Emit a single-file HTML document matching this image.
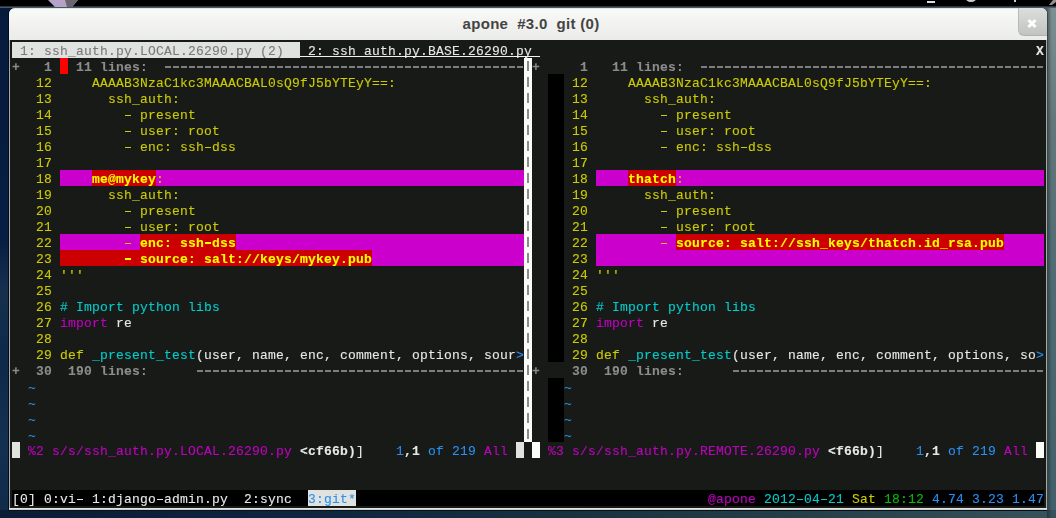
<!DOCTYPE html>
<html><head><meta charset="utf-8">
<style>
html,body{margin:0;padding:0;width:1056px;height:518px;overflow:hidden;background:#0e2440;}
#desk{position:absolute;left:0;top:0;width:1056px;height:518px;
 background:linear-gradient(90deg,#021a3c 0px,#031c3e 9px,#2c4a60 1000px,#4f6870 1056px);}
#panel{position:absolute;left:0;top:0;width:1056px;height:6px;background:#000;}
#pline{position:absolute;left:0;top:6px;width:1056px;height:2px;background:linear-gradient(180deg,#1a2230,#5a6a7c);}
#rstrip{position:absolute;left:1047px;top:0;width:9px;height:518px;background:linear-gradient(180deg,#7e9294 0px,#62787c 120px,#4e6a72 300px,#42606a 518px);}
#lstrip{position:absolute;left:0;top:0;width:9px;height:518px;background:linear-gradient(180deg,#061a3c 0px,#071e42 240px,#16304e 290px,#0e2848 360px,#143050 440px,#102a48 518px);}
#rshadow{position:absolute;left:1047px;top:8px;width:5px;height:510px;background:linear-gradient(90deg,rgba(0,0,0,.35),rgba(0,0,0,0));}
#bstrip{position:absolute;left:0;top:510px;width:1056px;height:8px;background:linear-gradient(90deg,#0a1c36 0px,#0e2440 300px,#163040 550px,#243e4a 800px,#36525c 1056px);}
#win{position:absolute;left:9px;top:8px;width:1038px;height:502px;background:#a8aaa6;border-radius:6px 6px 0 0;box-shadow:-1px 0 0 #000a20,1px 0 1px #3a4646,0 1px 0 #050a14;}
#wbot{position:absolute;left:9px;top:508px;width:1038px;height:2px;background:linear-gradient(180deg,#eef0ec,#c0c0bc);}
#title{position:absolute;left:9px;top:8px;width:1038px;height:32px;border-radius:6px 6px 0 0;
 background:linear-gradient(180deg,#c8ccc8 0px,#f8faf7 1px,#f4f5f2 12px,#ebece9 31px);}
#ttext{position:absolute;left:3px;top:15px;width:1056px;text-align:center;font:bold 15px "Liberation Sans",sans-serif;color:#444;letter-spacing:0.3px;line-height:17px;}
#close{position:absolute;left:1018px;top:8px;width:29px;height:28px;border-radius:0 6px 0 6px;
 background:linear-gradient(180deg,#dcdedb,#c2c4c1);border-left:1px solid #b8bab7;border-bottom:1px solid #b0b2af;box-sizing:border-box;}
#close:before,#close:after{content:"";position:absolute;left:8px;top:14px;width:10px;height:3px;background:#fff;transform:rotate(45deg);}
#close:after{transform:rotate(-45deg);}
#term{position:absolute;left:10px;top:40px;width:1036px;height:468px;background:#181a17;}
.b{position:absolute;height:16px;display:block;}
s.t{position:absolute;height:16px;line-height:16px;white-space:pre;text-decoration:none;
 font-family:"Liberation Mono",monospace;font-size:13px;letter-spacing:0.1987px;-webkit-text-stroke:0.1px currentColor;}
.d{position:absolute;width:2px;height:10px;background:#8a8a8a;display:block;}
.ic{position:absolute;}
</style></head><body>
<div id="desk"></div>
<div id="rstrip"></div><div id="lstrip"></div>
<div id="bstrip"></div><div id="rshadow"></div>
<div id="panel"></div><div id="pline"></div>
<svg class="ic" style="left:44px;top:0px" width="36" height="8" viewBox="0 0 36 8"><path d="M4 0 L34 0 L28 7 L11 7 Z" fill="#b4a2c8"/><path d="M21 0 L34 0 L28 7 L23 7 Z" fill="#6a6670"/></svg>
<div class="ic" style="left:927px;top:1px;width:8px;height:2px;background:#ddd"></div>
<div class="ic" style="left:965px;top:-9px;width:12px;height:11px;border-radius:50%;border:2px solid #ccc;box-sizing:border-box"></div>
<div class="ic" style="left:1014px;top:0px;width:2px;height:2px;background:#ccc"></div>
<svg class="ic" style="left:1046px;top:0px" width="10" height="6" viewBox="0 0 10 6"><path d="M3 5 L7 0 L10 0 L10 2 L6 5 Z" fill="#909090"/></svg>
<div id="win"></div><div id="wbot"></div>
<div id="title"></div>
<div id="ttext">apone&nbsp; #3.0&nbsp; git (0)</div>
<div id="close"></div>
<div id="term"></div>
<div id="tl" style="position:absolute;left:0;top:0;width:1056px;height:518px;will-change:transform">
<i class="b" style="left:12px;top:42px;width:288px;background:#e0e2df"></i>
<s class="t" style="left:20px;top:44px;color:#7a7a7a">1: ssh_auth.py.LOCAL.26290.py (2)</s>
<s class="t" style="left:308px;top:44px;color:#e8e8e8">2: ssh_auth.py.BASE.26290.py</s>
<s class="t" style="left:1036px;top:44px;color:#e8e8e8;font-weight:bold">X</s>
<i class="b" style="left:60px;top:58px;width:8px;background:#ff0000"></i>
<s class="t" style="left:12px;top:60px;color:#8c8c8c;font-weight:bold">+</s>
<s class="t" style="left:44px;top:60px;color:#8c8c8c;font-weight:bold">1</s>
<s class="t" style="left:76px;top:60px;color:#8c8c8c;font-weight:bold">11 lines:</s>
<s class="t" style="left:532px;top:60px;color:#8c8c8c;font-weight:bold">+</s>
<s class="t" style="left:580px;top:60px;color:#8c8c8c;font-weight:bold">1</s>
<s class="t" style="left:612px;top:60px;color:#8c8c8c;font-weight:bold">11 lines:</s>
<i class="b" style="left:548px;top:74px;width:16px;background:#000000"></i>
<s class="t" style="left:36px;top:76px;color:#cccc00">12</s>
<s class="t" style="left:92px;top:76px;color:#cccc00">AAAAB3NzaC1kc3MAAACBAL0sQ9fJ5bYTEyY==:</s>
<s class="t" style="left:572px;top:76px;color:#cccc00">12</s>
<s class="t" style="left:628px;top:76px;color:#cccc00">AAAAB3NzaC1kc3MAAACBAL0sQ9fJ5bYTEyY==:</s>
<i class="b" style="left:548px;top:90px;width:16px;background:#000000"></i>
<s class="t" style="left:36px;top:92px;color:#cccc00">13</s>
<s class="t" style="left:108px;top:92px;color:#cccc00">ssh_auth:</s>
<s class="t" style="left:572px;top:92px;color:#cccc00">13</s>
<s class="t" style="left:644px;top:92px;color:#cccc00">ssh_auth:</s>
<i class="b" style="left:548px;top:106px;width:16px;background:#000000"></i>
<s class="t" style="left:36px;top:108px;color:#cccc00">14</s>
<s class="t" style="left:140px;top:108px;color:#cccc00">present</s>
<s class="t" style="left:572px;top:108px;color:#cccc00">14</s>
<s class="t" style="left:676px;top:108px;color:#cccc00">present</s>
<i class="b" style="left:548px;top:122px;width:16px;background:#000000"></i>
<s class="t" style="left:36px;top:124px;color:#cccc00">15</s>
<s class="t" style="left:140px;top:124px;color:#cccc00">user: root</s>
<s class="t" style="left:572px;top:124px;color:#cccc00">15</s>
<s class="t" style="left:676px;top:124px;color:#cccc00">user: root</s>
<i class="b" style="left:548px;top:138px;width:16px;background:#000000"></i>
<s class="t" style="left:36px;top:140px;color:#cccc00">16</s>
<s class="t" style="left:140px;top:140px;color:#cccc00">enc: ssh dss</s>
<s class="t" style="left:572px;top:140px;color:#cccc00">16</s>
<s class="t" style="left:676px;top:140px;color:#cccc00">enc: ssh dss</s>
<i class="b" style="left:548px;top:154px;width:16px;background:#000000"></i>
<s class="t" style="left:36px;top:156px;color:#cccc00">17</s>
<s class="t" style="left:572px;top:156px;color:#cccc00">17</s>
<i class="b" style="left:60px;top:170px;width:32px;background:#cc00cc"></i>
<i class="b" style="left:92px;top:170px;width:64px;background:#cc0000"></i>
<i class="b" style="left:156px;top:170px;width:368px;background:#cc00cc"></i>
<i class="b" style="left:548px;top:170px;width:16px;background:#000000"></i>
<i class="b" style="left:596px;top:170px;width:32px;background:#cc00cc"></i>
<i class="b" style="left:628px;top:170px;width:48px;background:#cc0000"></i>
<i class="b" style="left:676px;top:170px;width:368px;background:#cc00cc"></i>
<s class="t" style="left:36px;top:172px;color:#cccc00">18</s>
<s class="t" style="left:92px;top:172px;color:#ffff00;font-weight:bold">me@mykey</s>
<s class="t" style="left:156px;top:172px;color:#cccc00">:</s>
<s class="t" style="left:572px;top:172px;color:#cccc00">18</s>
<s class="t" style="left:628px;top:172px;color:#ffff00;font-weight:bold">thatch</s>
<s class="t" style="left:676px;top:172px;color:#cccc00">:</s>
<i class="b" style="left:548px;top:186px;width:16px;background:#000000"></i>
<s class="t" style="left:36px;top:188px;color:#cccc00">19</s>
<s class="t" style="left:108px;top:188px;color:#cccc00">ssh_auth:</s>
<s class="t" style="left:572px;top:188px;color:#cccc00">19</s>
<s class="t" style="left:644px;top:188px;color:#cccc00">ssh_auth:</s>
<i class="b" style="left:548px;top:202px;width:16px;background:#000000"></i>
<s class="t" style="left:36px;top:204px;color:#cccc00">20</s>
<s class="t" style="left:140px;top:204px;color:#cccc00">present</s>
<s class="t" style="left:572px;top:204px;color:#cccc00">20</s>
<s class="t" style="left:676px;top:204px;color:#cccc00">present</s>
<i class="b" style="left:548px;top:218px;width:16px;background:#000000"></i>
<s class="t" style="left:36px;top:220px;color:#cccc00">21</s>
<s class="t" style="left:140px;top:220px;color:#cccc00">user: root</s>
<s class="t" style="left:572px;top:220px;color:#cccc00">21</s>
<s class="t" style="left:676px;top:220px;color:#cccc00">user: root</s>
<i class="b" style="left:60px;top:234px;width:80px;background:#cc00cc"></i>
<i class="b" style="left:140px;top:234px;width:96px;background:#cc0000"></i>
<i class="b" style="left:236px;top:234px;width:288px;background:#cc00cc"></i>
<i class="b" style="left:548px;top:234px;width:16px;background:#000000"></i>
<i class="b" style="left:596px;top:234px;width:80px;background:#cc00cc"></i>
<i class="b" style="left:676px;top:234px;width:328px;background:#cc0000"></i>
<i class="b" style="left:1004px;top:234px;width:40px;background:#cc00cc"></i>
<s class="t" style="left:36px;top:236px;color:#cccc00">22</s>
<s class="t" style="left:140px;top:236px;color:#ffff00;font-weight:bold">enc: ssh dss</s>
<s class="t" style="left:572px;top:236px;color:#cccc00">22</s>
<s class="t" style="left:676px;top:236px;color:#ffff00;font-weight:bold">source: salt://ssh_keys/thatch.id_rsa.pub</s>
<i class="b" style="left:60px;top:250px;width:312px;background:#cc0000"></i>
<i class="b" style="left:372px;top:250px;width:152px;background:#cc00cc"></i>
<i class="b" style="left:548px;top:250px;width:16px;background:#000000"></i>
<i class="b" style="left:596px;top:250px;width:448px;background:#cc00cc"></i>
<s class="t" style="left:36px;top:252px;color:#cccc00">23</s>
<s class="t" style="left:140px;top:252px;color:#ffff00;font-weight:bold">source: salt://keys/mykey.pub</s>
<s class="t" style="left:572px;top:252px;color:#cccc00">23</s>
<i class="b" style="left:548px;top:266px;width:16px;background:#000000"></i>
<s class="t" style="left:36px;top:268px;color:#cccc00">24 &#x27;&#x27;&#x27;</s>
<s class="t" style="left:572px;top:268px;color:#cccc00">24 &#x27;&#x27;&#x27;</s>
<i class="b" style="left:548px;top:282px;width:16px;background:#000000"></i>
<s class="t" style="left:36px;top:284px;color:#cccc00">25</s>
<s class="t" style="left:572px;top:284px;color:#cccc00">25</s>
<i class="b" style="left:548px;top:298px;width:16px;background:#000000"></i>
<s class="t" style="left:36px;top:300px;color:#cccc00">26</s>
<s class="t" style="left:60px;top:300px;color:#00cdcd"># Import python libs</s>
<s class="t" style="left:572px;top:300px;color:#cccc00">26</s>
<s class="t" style="left:596px;top:300px;color:#00cdcd"># Import python libs</s>
<i class="b" style="left:548px;top:314px;width:16px;background:#000000"></i>
<s class="t" style="left:36px;top:316px;color:#cccc00">27</s>
<s class="t" style="left:60px;top:316px;color:#c000c0">import</s>
<s class="t" style="left:116px;top:316px;color:#e8e8e8">re</s>
<s class="t" style="left:572px;top:316px;color:#cccc00">27</s>
<s class="t" style="left:596px;top:316px;color:#c000c0">import</s>
<s class="t" style="left:652px;top:316px;color:#e8e8e8">re</s>
<i class="b" style="left:548px;top:330px;width:16px;background:#000000"></i>
<s class="t" style="left:36px;top:332px;color:#cccc00">28</s>
<s class="t" style="left:572px;top:332px;color:#cccc00">28</s>
<i class="b" style="left:548px;top:346px;width:16px;background:#000000"></i>
<s class="t" style="left:36px;top:348px;color:#cccc00">29 def</s>
<s class="t" style="left:92px;top:348px;color:#00cdcd">_present_test</s>
<s class="t" style="left:196px;top:348px;color:#e8e8e8">(user, name, enc, comment, options, sour</s>
<s class="t" style="left:516px;top:348px;color:#2a90f2">&gt;</s>
<s class="t" style="left:572px;top:348px;color:#cccc00">29 def</s>
<s class="t" style="left:628px;top:348px;color:#00cdcd">_present_test</s>
<s class="t" style="left:732px;top:348px;color:#e8e8e8">(user, name, enc, comment, options, so</s>
<s class="t" style="left:1036px;top:348px;color:#2a90f2">&gt;</s>
<s class="t" style="left:12px;top:364px;color:#8c8c8c;font-weight:bold">+</s>
<s class="t" style="left:36px;top:364px;color:#8c8c8c;font-weight:bold">30</s>
<s class="t" style="left:68px;top:364px;color:#8c8c8c;font-weight:bold">190 lines:</s>
<s class="t" style="left:532px;top:364px;color:#8c8c8c;font-weight:bold">+</s>
<s class="t" style="left:572px;top:364px;color:#8c8c8c;font-weight:bold">30</s>
<s class="t" style="left:604px;top:364px;color:#8c8c8c;font-weight:bold">190 lines:</s>
<i class="b" style="left:548px;top:378px;width:16px;background:#000000"></i>
<s class="t" style="left:28px;top:381px;color:#2a90f2">~</s>
<s class="t" style="left:564px;top:381px;color:#2a90f2">~</s>
<i class="b" style="left:548px;top:394px;width:16px;background:#000000"></i>
<s class="t" style="left:28px;top:397px;color:#2a90f2">~</s>
<s class="t" style="left:564px;top:397px;color:#2a90f2">~</s>
<i class="b" style="left:548px;top:410px;width:16px;background:#000000"></i>
<s class="t" style="left:28px;top:413px;color:#2a90f2">~</s>
<s class="t" style="left:564px;top:413px;color:#2a90f2">~</s>
<i class="b" style="left:548px;top:426px;width:16px;background:#000000"></i>
<s class="t" style="left:28px;top:429px;color:#2a90f2">~</s>
<s class="t" style="left:564px;top:429px;color:#2a90f2">~</s>
<i class="b" style="left:12px;top:442px;width:8px;background:#e0e2df"></i>
<i class="b" style="left:516px;top:442px;width:8px;background:#e0e2df"></i>
<i class="b" style="left:532px;top:442px;width:8px;background:#fbfbf8"></i>
<i class="b" style="left:1036px;top:442px;width:8px;background:#fbfbf8"></i>
<s class="t" style="left:28px;top:444px;color:#c000c0">%2 s/s/ssh_auth.py.LOCAL.26290.py</s>
<s class="t" style="left:300px;top:444px;color:#e8e8e8;font-weight:bold">&lt;cf66b)</s>
<s class="t" style="left:356px;top:444px;color:#e8e8e8">]</s>
<s class="t" style="left:396px;top:444px;color:#2a90f2">1</s>
<s class="t" style="left:404px;top:444px;color:#e8e8e8;font-weight:bold">,1</s>
<s class="t" style="left:428px;top:444px;color:#2a90f2">of 219</s>
<s class="t" style="left:484px;top:444px;color:#c000c0">All</s>
<s class="t" style="left:548px;top:444px;color:#c000c0">%3 s/s/ssh_auth.py.REMOTE.26290.py</s>
<s class="t" style="left:828px;top:444px;color:#e8e8e8;font-weight:bold">&lt;f66b)</s>
<s class="t" style="left:876px;top:444px;color:#e8e8e8">]</s>
<s class="t" style="left:916px;top:444px;color:#2a90f2">1</s>
<s class="t" style="left:924px;top:444px;color:#e8e8e8;font-weight:bold">,1</s>
<s class="t" style="left:948px;top:444px;color:#2a90f2">of 219</s>
<s class="t" style="left:1004px;top:444px;color:#c000c0">All</s>
<i class="b" style="left:12px;top:490px;width:296px;background:#000000"></i>
<i class="b" style="left:308px;top:490px;width:48px;background:#e0e2df"></i>
<i class="b" style="left:356px;top:490px;width:688px;background:#000000"></i>
<s class="t" style="left:12px;top:492px;color:#e8e8e8">[0] 0:vi</s>
<s class="t" style="left:92px;top:492px;color:#e8e8e8">1:django admin.py</s>
<s class="t" style="left:244px;top:492px;color:#e8e8e8">2:sync</s>
<s class="t" style="left:308px;top:492px;color:#2a90f2">3:git*</s>
<s class="t" style="left:708px;top:492px;color:#c000c0">@apone</s>
<s class="t" style="left:764px;top:492px;color:#00cdcd">2012 04 21</s>
<s class="t" style="left:852px;top:492px;color:#cccc00">Sat</s>
<s class="t" style="left:884px;top:492px;color:#00c000">18:12</s>
<s class="t" style="left:932px;top:492px;color:#2a90f2">4.74 3.23 1.47</s>
<i class="b" style="left:125px;top:115px;width:6px;height:1px;background:#cccc00"></i>
<i class="b" style="left:661px;top:115px;width:6px;height:1px;background:#cccc00"></i>
<i class="b" style="left:125px;top:131px;width:6px;height:1px;background:#cccc00"></i>
<i class="b" style="left:661px;top:131px;width:6px;height:1px;background:#cccc00"></i>
<i class="b" style="left:125px;top:147px;width:6px;height:1px;background:#cccc00"></i>
<i class="b" style="left:205px;top:147px;width:6px;height:1px;background:#cccc00"></i>
<i class="b" style="left:661px;top:147px;width:6px;height:1px;background:#cccc00"></i>
<i class="b" style="left:741px;top:147px;width:6px;height:1px;background:#cccc00"></i>
<i class="b" style="left:125px;top:211px;width:6px;height:1px;background:#cccc00"></i>
<i class="b" style="left:661px;top:211px;width:6px;height:1px;background:#cccc00"></i>
<i class="b" style="left:125px;top:227px;width:6px;height:1px;background:#cccc00"></i>
<i class="b" style="left:661px;top:227px;width:6px;height:1px;background:#cccc00"></i>
<i class="b" style="left:125px;top:243px;width:6px;height:1px;background:#cccc00"></i>
<i class="b" style="left:205px;top:242px;width:6px;height:2px;background:#ffff00"></i>
<i class="b" style="left:661px;top:243px;width:6px;height:1px;background:#cccc00"></i>
<i class="b" style="left:125px;top:258px;width:6px;height:2px;background:#ffff00"></i>
<i class="b" style="left:77px;top:499px;width:6px;height:1px;background:#e8e8e8"></i>
<i class="b" style="left:157px;top:499px;width:6px;height:1px;background:#e8e8e8"></i>
<i class="b" style="left:797px;top:499px;width:6px;height:1px;background:#00cdcd"></i>
<i class="b" style="left:821px;top:499px;width:6px;height:1px;background:#00cdcd"></i>
<i class="b" style="left:524px;top:58px;width:8px;background:#fbfbf8"></i>
<i class="d" style="left:527px;top:61px"></i>
<i class="b" style="left:524px;top:74px;width:8px;background:#fbfbf8"></i>
<i class="d" style="left:527px;top:77px"></i>
<i class="b" style="left:524px;top:90px;width:8px;background:#fbfbf8"></i>
<i class="d" style="left:527px;top:93px"></i>
<i class="b" style="left:524px;top:106px;width:8px;background:#fbfbf8"></i>
<i class="d" style="left:527px;top:109px"></i>
<i class="b" style="left:524px;top:122px;width:8px;background:#fbfbf8"></i>
<i class="d" style="left:527px;top:125px"></i>
<i class="b" style="left:524px;top:138px;width:8px;background:#fbfbf8"></i>
<i class="d" style="left:527px;top:141px"></i>
<i class="b" style="left:524px;top:154px;width:8px;background:#fbfbf8"></i>
<i class="d" style="left:527px;top:157px"></i>
<i class="b" style="left:524px;top:170px;width:8px;background:#fbfbf8"></i>
<i class="d" style="left:527px;top:173px"></i>
<i class="b" style="left:524px;top:186px;width:8px;background:#fbfbf8"></i>
<i class="d" style="left:527px;top:189px"></i>
<i class="b" style="left:524px;top:202px;width:8px;background:#fbfbf8"></i>
<i class="d" style="left:527px;top:205px"></i>
<i class="b" style="left:524px;top:218px;width:8px;background:#fbfbf8"></i>
<i class="d" style="left:527px;top:221px"></i>
<i class="b" style="left:524px;top:234px;width:8px;background:#fbfbf8"></i>
<i class="d" style="left:527px;top:237px"></i>
<i class="b" style="left:524px;top:250px;width:8px;background:#fbfbf8"></i>
<i class="d" style="left:527px;top:253px"></i>
<i class="b" style="left:524px;top:266px;width:8px;background:#fbfbf8"></i>
<i class="d" style="left:527px;top:269px"></i>
<i class="b" style="left:524px;top:282px;width:8px;background:#fbfbf8"></i>
<i class="d" style="left:527px;top:285px"></i>
<i class="b" style="left:524px;top:298px;width:8px;background:#fbfbf8"></i>
<i class="d" style="left:527px;top:301px"></i>
<i class="b" style="left:524px;top:314px;width:8px;background:#fbfbf8"></i>
<i class="d" style="left:527px;top:317px"></i>
<i class="b" style="left:524px;top:330px;width:8px;background:#fbfbf8"></i>
<i class="d" style="left:527px;top:333px"></i>
<i class="b" style="left:524px;top:346px;width:8px;background:#fbfbf8"></i>
<i class="d" style="left:527px;top:349px"></i>
<i class="b" style="left:524px;top:362px;width:8px;background:#fbfbf8"></i>
<i class="d" style="left:527px;top:365px"></i>
<i class="b" style="left:524px;top:378px;width:8px;background:#fbfbf8"></i>
<i class="d" style="left:527px;top:381px"></i>
<i class="b" style="left:524px;top:394px;width:8px;background:#fbfbf8"></i>
<i class="d" style="left:527px;top:397px"></i>
<i class="b" style="left:524px;top:410px;width:8px;background:#fbfbf8"></i>
<i class="d" style="left:527px;top:413px"></i>
<i class="b" style="left:524px;top:426px;width:8px;background:#fbfbf8"></i>
<i class="d" style="left:527px;top:429px"></i>
<i class="b" style="left:300px;top:56px;width:240px;height:1px;background:#f0f0f0"></i>
<i class="b" style="left:164px;top:66px;width:360px;height:2px;background:repeating-linear-gradient(90deg,transparent 0px,transparent 1px,#7e7e7e 1px,#7e7e7e 7px,transparent 7px,transparent 8px)"></i>
<i class="b" style="left:196px;top:370px;width:328px;height:2px;background:repeating-linear-gradient(90deg,transparent 0px,transparent 1px,#7e7e7e 1px,#7e7e7e 7px,transparent 7px,transparent 8px)"></i>
<i class="b" style="left:700px;top:66px;width:344px;height:2px;background:repeating-linear-gradient(90deg,transparent 0px,transparent 1px,#7e7e7e 1px,#7e7e7e 7px,transparent 7px,transparent 8px)"></i>
<i class="b" style="left:732px;top:370px;width:312px;height:2px;background:repeating-linear-gradient(90deg,transparent 0px,transparent 1px,#7e7e7e 1px,#7e7e7e 7px,transparent 7px,transparent 8px)"></i>
</div>
</body></html>
